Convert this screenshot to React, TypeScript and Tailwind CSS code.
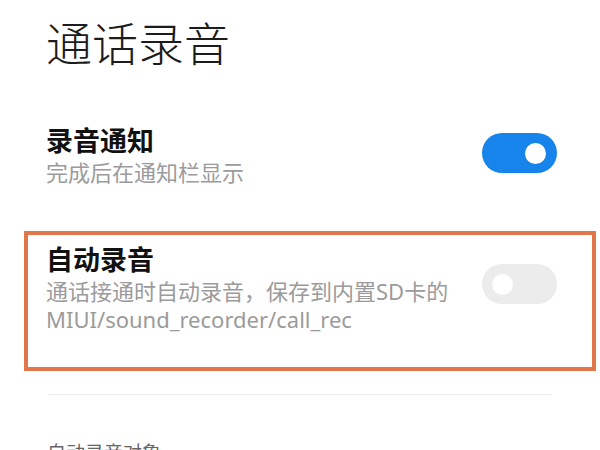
export default function App() {
  return (
    <div className="w-[600px] h-[450px] overflow-hidden bg-white font-['Noto_Sans','Noto_Sans_CJK_SC',sans-serif]">
      <h1 className="pl-[46px] pt-[20px] text-[46px] leading-none font-light text-[#1c1c1c]">
        通话录音
      </h1>

      {/* 录音通知 */}
      <div className="mt-[61px] flex items-start justify-between pl-[46px] pr-[43px]">
        <div>
          <div className="text-[27px] leading-none font-bold text-[#111]">录音通知</div>
          <div className="mt-1 text-[22px] leading-[28px] text-[#9b9b9b]">完成后在通知栏显示</div>
        </div>
        <div className="mt-[6px] flex h-[40px] w-[75px] items-center justify-end rounded-full bg-[#1784ec] pr-[11px]">
          <div className="h-[21px] w-[21px] rounded-full bg-white" />
        </div>
      </div>

      {/* 自动录音 */}
      <div className="mt-[45px] ml-[24px] w-[572px] border-4 border-[#e2764b] pl-[18px] pr-[35px] pt-[11px] pb-[34px]">
        <div className="flex items-start justify-between">
          <div>
            <div className="text-[27px] leading-none font-bold text-[#111]">自动录音</div>
            <div className="mt-1 text-[22px] leading-[28px] text-[#9b9b9b]">
              通话接通时自动录音，保存到内置SD卡的
              <br />
              MIUI/sound_recorder/call_rec
            </div>
          </div>
          <div className="mt-[18px] flex h-[40px] w-[75px] items-center rounded-full bg-[#ececec] pl-[10px]">
            <div className="h-[21px] w-[21px] rounded-full bg-white" />
          </div>
        </div>
      </div>

      <div className="mx-[48px] mt-[23px] h-px bg-[#ededed]" />

      <div className="mt-[49px] pl-[47px] text-[19px] leading-none text-[#666]">自动录音对象</div>
    </div>
  );
}
